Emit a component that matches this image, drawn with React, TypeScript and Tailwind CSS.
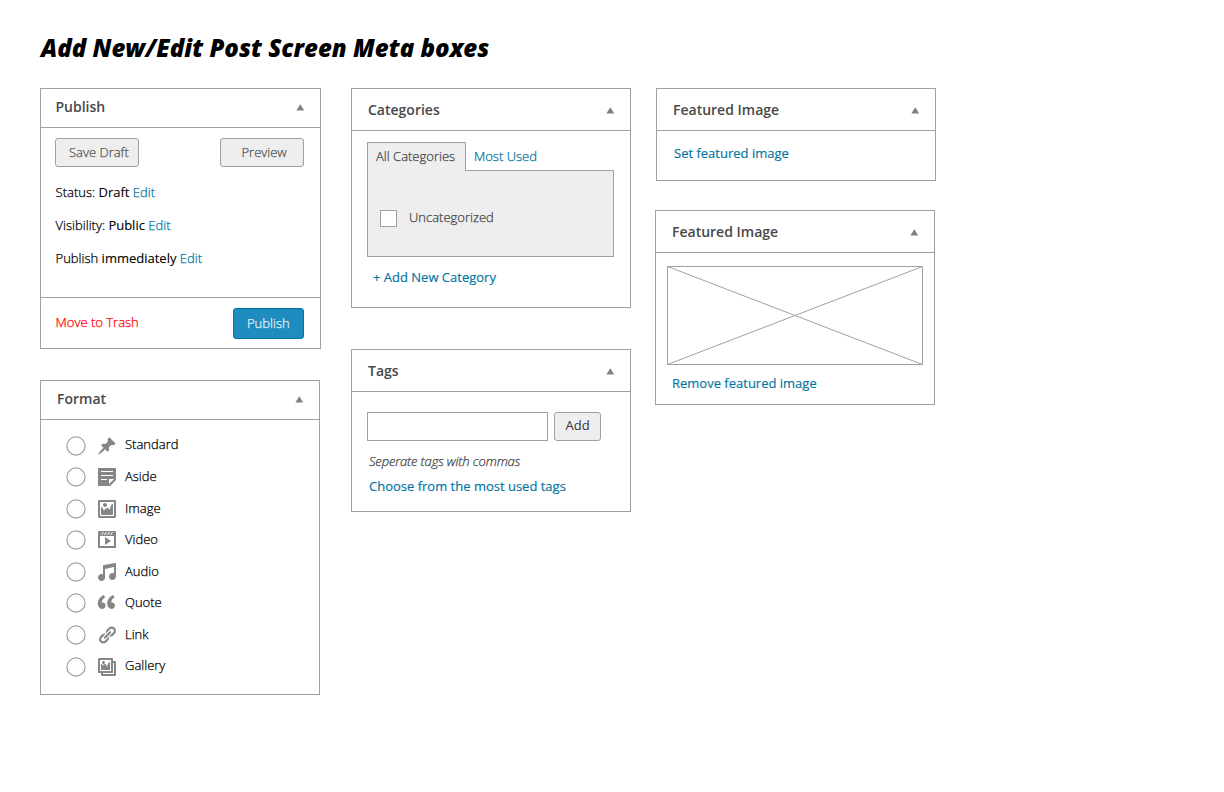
import type { ReactNode } from "react";

const formats = [
  {
    name: "Standard",
    d: "M10.44 3.02l1.82-1.82 6.36 6.35-1.83 1.82c-1.05-.68-2.48-.57-3.41.36l-.75.75c-.92.93-1.04 2.35-.35 3.41l-1.83 1.82-2.41-2.41-2.8 2.79c-.42.42-3.38 2.71-3.8 2.29s1.86-3.39 2.28-3.81l2.79-2.79L4.1 9.36l1.83-1.82c1.05.69 2.48.57 3.4-.36l.75-.75c.93-.92 1.05-2.35.36-3.41z",
  },
  {
    name: "Aside",
    d: "M1 1h18v12l-6 6H1V1zm3 3v1h12V4H4zm0 4v1h12V8H4zm6 5v-1H4v1h6zm2 4l5-5h-5v5z",
  },
  {
    name: "Image",
    d: "M2.25 1h15.5c.69 0 1.25.56 1.25 1.25v15.5c0 .69-.56 1.25-1.25 1.25H2.25C1.56 19 1 18.44 1 17.75V2.25C1 1.56 1.56 1 2.25 1zM17 17V3H3v14h14zM10 6c0-1.1-.9-2-2-2s-2 .9-2 2 .9 2 2 2 2-.9 2-2zm3 5s0-6 3-6v10c0 .55-.45 1-1 1H5c-.55 0-1-.45-1-1V8c2 0 3 4 3 4s1-3 3-3 3 2 3 2z",
  },
  {
    name: "Video",
    d: "M2 1h16c.55 0 1 .45 1 1v16l-18-.02V2c0-.55.45-1 1-1zm4 1L4 5h1l2-3H6zm4 0H9L7 5h1l2-3zm3 0h-1l-2 3h1l2-3zm3 0h-1l-2 3h1l2-3zm1 14V6H3v10h14zM8 7l6 4-6 4V7z",
  },
  {
    name: "Audio",
    d: "M6.99 3.08l11.02-2c.55-.08.99.45.99 1V14.5c0 1.94-1.57 3.5-3.5 3.5S12 16.44 12 14.5c0-1.93 1.57-3.5 3.5-3.5.54 0 1.04.14 1.5.35V5.08l-9 2V16c-.24 1.7-1.74 3-3.5 3C2.57 19 1 17.44 1 15.5 1 13.57 2.57 12 4.5 12c.54 0 1.04.14 1.5.35V4.08c0-.55.44-.91.99-1z",
  },
  {
    name: "Quote",
    d: "M8.54 12.74c0-.87-.24-1.61-.72-2.22-.73-.92-2.14-1.03-2.96-.85-.34-1.93 1.3-4.39 3.42-5.45L6.65 1.94C3.45 3.46.31 6.96.85 11.37 1.19 14.16 2.8 16 5.08 16c1 0 1.83-.29 2.48-.88.66-.59.98-1.38.98-2.38zm9.43 0c0-.87-.24-1.61-.72-2.22-.73-.92-2.14-1.03-2.96-.85-.34-1.93 1.3-4.39 3.42-5.45l-1.63-2.28c-3.2 1.52-6.34 5.02-5.8 9.43.34 2.79 1.95 4.63 4.23 4.63 1 0 1.83-.29 2.48-.88.66-.59.98-1.38.98-2.38z",
  },
  {
    name: "Link",
    d: "M17.74 2.76c1.68 1.69 1.68 4.41 0 6.1l-1.53 1.52c-1.12 1.12-2.7 1.47-4.14 1.09l2.62-2.61.76-.77.76-.76c.84-.84.84-2.2 0-3.04-.84-.85-2.2-.85-3.04 0l-.77.76-3.38 3.38c-.37-1.44-.02-3.02 1.1-4.14l1.52-1.53c1.69-1.68 4.42-1.68 6.1 0zM8.59 13.43l5.34-5.34c.42-.42.42-1.1 0-1.52-.44-.43-1.13-.39-1.53 0l-5.33 5.34c-.42.42-.42 1.1 0 1.52.44.43 1.13.39 1.52 0zm-.76 2.29l4.14-4.15c.38 1.44.03 3.02-1.09 4.14l-1.52 1.53c-1.69 1.68-4.41 1.68-6.1 0-1.68-1.68-1.68-4.42 0-6.1l1.53-1.52c1.12-1.12 2.7-1.47 4.14-1.1l-4.14 4.15c-.85.84-.85 2.2 0 3.05.84.84 2.2.84 3.04 0z",
  },
  {
    name: "Gallery",
    d: "M16 4h1.96c.57 0 1.04.47 1.04 1.04v12.92c0 .57-.47 1.04-1.04 1.04H5.04C4.47 19 4 18.53 4 17.96V16H2.04C1.47 16 1 15.53 1 14.96V2.04C1 1.47 1.47 1 2.04 1h12.92c.57 0 1.04.47 1.04 1.04V4zM3 14h11V3H3v11zm5-8.5C8 4.67 7.33 4 6.5 4S5 4.67 5 5.5 5.67 7 6.5 7 8 6.33 8 5.5zm2 4.5s1-5 3-5v8H4V7c2 0 2 2 2 2s.33-2 2-2 2 3 2 3zm7 7V6h-1v8.96c0 .57-.47 1.04-1.04 1.04H6v1h11z",
  },
];

function MetaBox({
  title,
  className,
  header,
  children,
}: {
  title: string;
  className: string;
  header: string;
  children: ReactNode;
}) {
  return (
    <section className={`flex flex-col border border-[#a0a0a0] bg-white ${className}`}>
      <header className={`flex shrink-0 justify-between border-b border-[#a0a0a0] pr-[15px] ${header}`}>
        <h2 className="text-sm leading-5 font-semibold text-[#484848]">{title}</h2>
        <svg className="mt-[7px] h-[7px] w-[9px] fill-[#808080]" viewBox="0 0 9 7">
          <path d="M4.3 .2L8.2 6.6H.4z" />
        </svg>
      </header>
      {children}
    </section>
  );
}

function Edit() {
  return <a className="text-[#0074a2]">Edit</a>;
}

function Value({ children }: { children: ReactNode }) {
  return <b className="font-normal [-webkit-text-stroke:0.1px_currentColor]">{children}</b>;
}

const light = "font-light [-webkit-text-stroke:0.25px_currentColor]";
const link = "text-[#0074a2] [-webkit-text-stroke:0.15px_currentColor]";
const button = "rounded-[3px] border border-[#a0a0a0] bg-[#eee] text-left";

export default function App() {
  return (
    <main className="h-[792px] w-[1224px] overflow-hidden bg-white pl-10 font-['Open_Sans',sans-serif] text-[13px] leading-5 whitespace-nowrap text-black">
      <h1 className="h-[88px] pt-[33px] pl-px text-2xl leading-[30px] font-extrabold tracking-[0.01px] italic">
        Add New/Edit Post Screen Meta boxes
      </h1>

      <div className="flex items-start">
        <div className="w-[281px]">
          <MetaBox title="Publish" className="h-[261px] w-[281px]" header="h-[39px] pl-[14.5px] pt-2">
            <div className={`h-[169px] pr-4 pl-[14px] pt-[10px] ${light}`}>
              <div className="flex justify-between text-[#555]">
                <button className={`h-[29px] w-[84px] pb-px pl-[13px] ${button}`}>Save Draft</button>
                <button className={`h-[29px] w-[84px] pb-px pl-[20.5px] ${button}`}>Preview</button>
              </div>
              <div className="pl-[0.6px]">
                <p className="mt-[15px]">
                  Status: <Value>Draft</Value> <Edit />
                </p>
                <p className="mt-[13px]">
                  Visibility: <Value>Public</Value> <Edit />
                </p>
                <p className="mt-[13px]">
                  Publish <Value>immediately</Value> <Edit />
                </p>
              </div>
            </div>
            <footer className={`flex flex-1 justify-between border-t border-[#a0a0a0] pr-4 pl-[14.6px] pt-[10px] ${light}`}>
              <a className="pt-1 text-[#f00]">Move to Trash</a>
              <button className="h-[31px] w-[71px] rounded-[3px] border border-[#0074a2] bg-[#1e8cbe] pb-[2px] pl-[13px] text-left text-[#e8f4fa]">
                Publish
              </button>
            </footer>
          </MetaBox>

          <MetaBox title="Format" className="mt-[31px] h-[315px] w-[280px]" header="h-[39px] pl-4 pt-2">
            <ul className={`pt-[9.85px] pl-[25px] ${light}`}>
              {formats.map((f) => (
                <li key={f.name} className="flex h-[31.57px] items-center">
                  <svg className="h-5 w-5 fill-white stroke-[#a0a0a0]" viewBox="0 0 20 20">
                    <circle cx="10" cy="10" r="9.1" strokeWidth="1.2" />
                  </svg>
                  <svg className="ml-[11px] h-5 w-5 fill-[#868686]" viewBox="0 0 20 20">
                    <path d={f.d} />
                  </svg>
                  <span className="-mt-[2.4px] ml-[8px]">{f.name}</span>
                </li>
              ))}
            </ul>
          </MetaBox>
        </div>

        <div className="ml-[30px] w-[280px]">
          <MetaBox title="Categories" className="h-[220px]" header="h-[42px] pl-4 pt-[11px]">
            <div className="px-[15px] pt-[11px]">
              <div className={`flex h-7 ${light}`}>
                <div className="z-10 h-[29px] w-[99px] shrink-0 border border-b-0 border-[#a0a0a0] bg-[#eee] pt-[3px] pl-2 text-[#444]">
                  All Categories
                </div>
                <a className="pt-1 pl-2 text-[#0074a2]">Most Used</a>
              </div>
              <label className={`flex h-[87px] w-[247px] items-start border border-[#a0a0a0] bg-[#eee] pl-3 text-[#444] ${light}`}>
                <span className="mt-[39px] h-[17px] w-[17px] border border-[#a0a0a0] bg-white" />
                <span className="mt-9 ml-3">Uncategorized</span>
              </label>
              <a className={`mt-[10px] ml-[6px] block ${link}`}>+ Add New Category</a>
            </div>
          </MetaBox>

          <MetaBox title="Tags" className="mt-[41px] h-[163px]" header="h-[42px] pl-4 pt-[11px]">
            <div className="px-[15px] pt-5">
              <div className="flex gap-[6px]">
                <input className="h-[29px] w-[181px] border border-[#a0a0a0] bg-white px-2 outline-none" />
                <button className={`h-[29px] w-[47px] pb-[3px] pl-[10.5px] text-[#333] ${button}`}>Add</button>
              </div>
              <p className={`mt-[10px] ml-[2px] tracking-[-0.14px] text-[#444] italic ${light}`}>
                Seperate tags with commas
              </p>
              <a className={`mt-[5px] ml-[2px] block ${link}`}>Choose from the most used tags</a>
            </div>
          </MetaBox>
        </div>

        <div className="ml-6 w-[281px]">
          <MetaBox title="Featured Image" className="ml-px h-[93px] w-[280px]" header="h-[42px] pl-4 pt-[11px]">
            <a className={`pt-3 pl-[17px] ${link}`}>Set featured image</a>
          </MetaBox>

          <MetaBox title="Featured Image" className="mt-[29px] h-[195px] w-[280px]" header="h-[42px] pl-4 pt-[11px]">
            <div className="pt-[13px] pl-[11px]">
              <svg className="h-[99px] w-64 fill-none stroke-[#a0a0a0]" viewBox="0 0 256 99">
                <path d="M.5.5h255v98H.5zM.5.5l255 98M255.5.5l-255 98" />
              </svg>
              <a className={`mt-2 ml-[5px] block ${link}`}>Remove featured image</a>
            </div>
          </MetaBox>
        </div>
      </div>
    </main>
  );
}
